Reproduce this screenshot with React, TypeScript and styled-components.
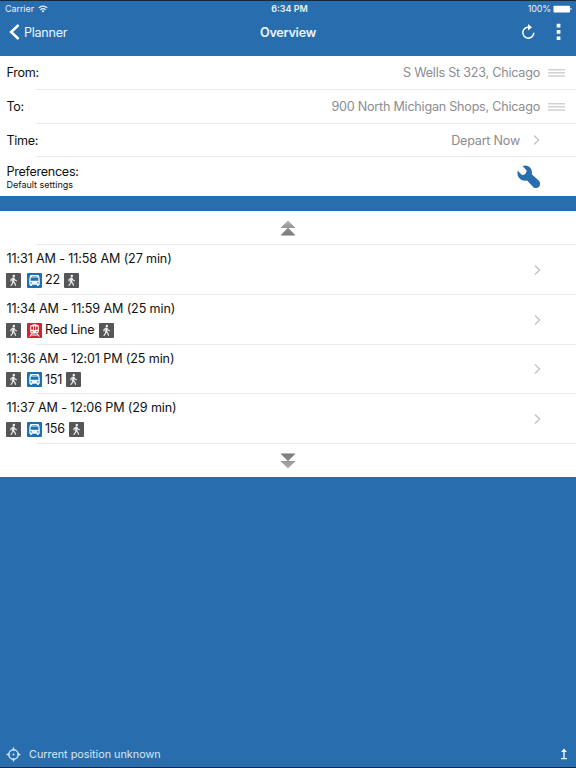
import React from "react";
import styled, { createGlobalStyle } from "styled-components";

const blue = "#286eae";

const GlobalStyle = createGlobalStyle`
  * { box-sizing: border-box; }
  body { margin: 0; background: ${blue}; }
`;

const Screen = styled.main`
  width: 576px;
  height: 768px;
  display: flex;
  flex-direction: column;
  overflow: hidden;
  background: ${blue};
  border-top: 1px solid #16283b;
  border-bottom: 1px solid #16283b;
  color: #111;
  font-family: Inter, "Liberation Sans", sans-serif;
  font-size: 12.6px;
  white-space: nowrap;
  svg { display: block; flex: none; }
`;

const StatusBar = styled.div`
  height: 15px;
  display: grid;
  grid-template-columns: 1fr auto 1fr;
  align-items: center;
  padding: 0 4px 0 5px;
  color: #e9f1f8;
  font-size: 9px;
  line-height: 15px;
`;

const StatusGroup = styled.div<{ $end?: boolean }>`
  display: flex;
  align-items: center;
  justify-content: ${(p) => (p.$end ? "flex-end" : "flex-start")};
  gap: ${(p) => (p.$end ? 2 : 4)}px;
  letter-spacing: ${(p) => (p.$end ? -0.12 : -0.08)}px;
`;

const Clock = styled.span`
  font-weight: 600;
  padding-left: 2px;
`;

const NavBar = styled.header`
  height: 40px;
  flex: none;
  display: grid;
  grid-template-columns: 1fr auto 1fr;
  align-items: center;
  padding: 0 15px 8px 9px;
  color: #eef5fb;
`;

const Back = styled.div`
  display: flex;
  align-items: center;
  gap: 4px;
  letter-spacing: -0.28px;
`;

const Title = styled.h1`
  margin: 0;
  padding-left: 6px;
  font-size: 12.6px;
  font-weight: 600;
  letter-spacing: -0.25px;
`;

const Actions = styled.div`
  display: flex;
  justify-content: flex-end;
  align-items: center;
  gap: 21px;
`;

const Panel = styled.section`
  background: #fff;
  flex: none;
`;

const Divider = styled.div`
  height: 1px;
  margin-left: 36px;
  background: #e9e9eb;
`;

const Field = styled.div<{ $height: number }>`
  height: ${(p) => p.$height}px;
  display: flex;
  align-items: center;
  justify-content: space-between;
  padding: 0 11px 0 6.5px;
`;

const Label = styled.span`
  letter-spacing: -0.3px;
`;

const Value = styled.div<{ $chevron?: boolean }>`
  display: flex;
  align-items: center;
  gap: ${(p) => (p.$chevron ? 13 : 8)}px;
  padding-right: ${(p) => (p.$chevron ? 25 : 0)}px;
  color: #8c8c90;
  letter-spacing: -0.23px;
`;

const Preferences = styled.div`
  height: 39px;
  display: flex;
  justify-content: space-between;
  padding: 6px 35px 0 6.5px;
`;

const WrenchSlot = styled.div`
  padding-top: 2px;
`;

const PreferenceText = styled.div`
  display: flex;
  flex-direction: column;
  line-height: 17px;
`;

const Small = styled.span`
  font-size: 9px;
  line-height: 9px;
`;

const Gap = styled.div`
  height: 15px;
  flex: none;
`;

const Pager = styled.div`
  height: 33px;
  display: flex;
  align-items: center;
  justify-content: center;
`;

const Trip = styled.div<{ $height: number }>`
  height: ${(p) => p.$height}px;
  display: flex;
  align-items: center;
  justify-content: space-between;
  padding: 0 35.5px 0 6px;
`;

const TripBody = styled.div`
  display: flex;
  flex-direction: column;
  gap: 5px;
  line-height: 16px;
  letter-spacing: -0.13px;
`;

const Time = styled.span`
  padding-left: 0.5px;
`;

const Legs = styled.div`
  display: flex;
  align-items: center;
  height: 16px;
`;

const Tile = styled.span<{ $kind: Kind }>`
  width: 15px;
  height: 15px;
  display: flex;
  align-items: center;
  justify-content: center;
  border-radius: 1px;
  background: ${(p) => ({ walk: "#555657", bus: "#1972b5", train: "#ce2435" })[p.$kind]};
`;

const Line = styled.span`
  display: flex;
  align-items: center;
  gap: 3px;
  margin: 0 4.3px 0 6px;
  letter-spacing: -0.28px;
`;

const Footer = styled.footer`
  margin-top: auto;
  height: 26px;
  display: flex;
  align-items: center;
  padding: 0 8px 0 6px;
  color: #d9e7f3;
  font-size: 10.8px;
`;

const Position = styled.span`
  flex: 1;
  margin-left: 8px;
`;

type Kind = "walk" | "bus" | "train";

const Wifi = () => (
  <svg width="10" height="8" viewBox="0 0 10 8" fill="none" stroke="currentColor" strokeWidth="1.2">
    <path d="M.7 2.9Q5-.8 9.3 2.9M2.4 4.7Q5 2.5 7.6 4.7" />
    <path d="M5 7.4 3.5 5.9Q5 4.8 6.5 5.9Z" fill="currentColor" stroke="none" />
  </svg>
);

const Battery = () => (
  <svg width="19" height="8" viewBox="0 0 19 8" fill="#fff">
    <rect x=".5" y=".7" width="16.5" height="6.8" rx=".8" />
    <path d="M17.5 2.8q1.2.2 1.2 1.2t-1.2 1.2z" />
  </svg>
);

const BackArrow = () => (
  <svg width="11" height="16" viewBox="0 0 11 16" fill="none" stroke="#fff" strokeWidth="2.5">
    <path d="M9.6 1 2.1 8l7.5 7" />
  </svg>
);

const Refresh = () => (
  <svg width="14" height="16" viewBox="0 0 14 16" fill="none" stroke="#fff" strokeWidth="1.5">
    <path d="M12.8 8.7A5.5 5.5 0 1 1 8 3.2" />
    <path d="M7 0 11 3.2 7 6.4z" fill="#fff" stroke="none" />
  </svg>
);

const More = () => (
  <svg width="5" height="18" viewBox="0 0 5 18" fill="#fff">
    <path d="M.7.8h3.7v3.7H.7zM.7 7.1h3.7v3.7H.7zM.7 13.4h3.7v3.7H.7z" />
  </svg>
);

const Grip = () => (
  <svg width="17" height="8" viewBox="0 0 17 8" fill="#d1d1d4">
    <path d="M0 0h17v1.5H0zM0 3.1h17v1.5H0zM0 6.2h17v1.5H0z" />
  </svg>
);

const Chevron = () => (
  <svg width="7" height="10" viewBox="0 0 7 10" fill="none" stroke="#c4c4c8" strokeWidth="1.4">
    <path d="m1 .6 4.6 4.4L1 9.4" />
  </svg>
);

const Wrench = () => (
  <svg width="24" height="24" viewBox="0 0 24 24" fill={blue}>
    <path d="M.8 5.8 5 9.9Q8.8 10.2 9.7 5.4L5.5 1.1C10.8-1 15.9 3.3 14.8 9.2L22.2 16.1C25 20.3 20.9 24.8 16.7 22.4L10.1 15.5C4.2 16.8-1 11.8.8 5.8Z" />
  </svg>
);

const DoubleTriangle = ({ down = false }: { down?: boolean }) => (
  <svg width="16" height="16" viewBox="0 0 16 16">
    <defs>
      <linearGradient id={down ? "fadeDown" : "fadeUp"} x2="0" y2="1" gradientUnits="objectBoundingBox">
        <stop stopColor={down ? "#777" : "#b2b2b2"} />
        <stop offset="1" stopColor={down ? "#b2b2b2" : "#777"} />
      </linearGradient>
    </defs>
    <path
      fill={`url(#${down ? "fadeDown" : "fadeUp"})`}
      d={down ? "M.5.5h15L8 8.5zM.5 8h15L8 15.5z" : "M8 .5 15.5 8H.5zM8 7.5l7.5 8H.5z"}
    />
  </svg>
);

const Walker = () => (
  <svg width="15" height="15" viewBox="0 0 15 15" fill="none" stroke="#eee" strokeLinecap="round" strokeLinejoin="round">
    <circle cx="7.8" cy="3" r="1.25" fill="#eee" stroke="none" />
    <path d="M7.4 5.5 7.2 8.3" strokeWidth="2.2" />
    <path d="M7.1 5.3 5 6.5V8M8 5.5l1 1.6 1.4.7M7 8.5 6.5 10.3 5 12.3M7.4 8.6l1.4 1.7.7 2" strokeWidth="1.15" />
  </svg>
);

const Bus = () => (
  <svg width="15" height="15" viewBox="0 0 15 15" fill="#f1f7fb">
    <path
      fillRule="evenodd"
      d="M4.2 1.9h6.6q1.2 0 1.4 1.3l.6 3.5v5h-1v1.2H9.9v-1.2H5.1v1.2H3.2v-1.2h-1v-5l.6-3.5Q3 1.9 4.2 1.9ZM5 3v.6h5V3ZM3.9 4.6l-.5 3.2h8.2l-.5-3.2ZM3.4 9.2v1.2h1.4V9.2Zm6.8 0v1.2h1.4V9.2Z"
    />
  </svg>
);

const Train = () => (
  <svg width="15" height="15" viewBox="0 0 15 15" fill="#fff">
    <path fillRule="evenodd" d="M5.6 1.2h3.8v.8h1.2q1.2 0 1.2 1.2v5.4q0 1.8-1.6 1.8H4.8q-1.6 0-1.6-1.8V3.2Q3.2 2 4.4 2h1.2ZM4.2 3.6v3.2h2V3.6Zm4.6 0v3.2h2V3.6ZM7 3.3v3.9h1V3.3ZM4.4 8.2v1h1.4v-1Zm4.8 0v1h1.4v-1Z" />
    <path d="M4.3 10.4h1.2L4.8 11.5h5.4l-.7-1.1h1.2l2.1 3.2h-1.3l-.6-1H4.1l-.6 1H2.2z" />
  </svg>
);

const Mode = ({ kind }: { kind: Kind }) => (
  <Tile $kind={kind}>{kind === "walk" ? <Walker /> : kind === "bus" ? <Bus /> : <Train />}</Tile>
);

const Target = () => (
  <svg width="15" height="15" viewBox="0 0 15 15" fill="none" stroke="currentColor" strokeWidth="1.4">
    <circle cx="7.5" cy="7.5" r="4.7" />
    <path d="M7.5.6v3M7.5 11.4v3M.6 7.5h3M11.4 7.5h3" />
    <circle cx="7.5" cy="7.5" r="1" fill="currentColor" stroke="none" />
  </svg>
);

const UpFromBar = () => (
  <svg width="8" height="12" viewBox="0 0 8 12" fill="none" stroke="#eef5fb" strokeWidth="1.4">
    <path d="M4 1.5v8.7M1 10.6h6" />
    <path d="M4 .5 7 4H1z" fill="#eef5fb" stroke="none" />
  </svg>
);

const trips: { time: string; line: string; kind: Kind; height: number }[] = [
  { time: "11:31 AM - 11:58 AM (27 min)", line: "22", kind: "bus", height: 49 },
  { time: "11:34 AM - 11:59 AM (25 min)", line: "Red Line", kind: "train", height: 49 },
  { time: "11:36 AM - 12:01 PM (25 min)", line: "151", kind: "bus", height: 48 },
  { time: "11:37 AM - 12:06 PM (29 min)", line: "156", kind: "bus", height: 49 },
];

export default function App() {
  return (
    <>
      <GlobalStyle />
      <Screen>
        <StatusBar>
          <StatusGroup>Carrier <Wifi /></StatusGroup>
          <Clock>6:34 PM</Clock>
          <StatusGroup $end>100% <Battery /></StatusGroup>
        </StatusBar>
        <NavBar>
          <Back><BackArrow />Planner</Back>
          <Title>Overview</Title>
          <Actions><Refresh /><More /></Actions>
        </NavBar>
        <Panel>
          <Field $height={33}><Label>From:</Label><Value>S Wells St 323, Chicago<Grip /></Value></Field>
          <Divider />
          <Field $height={33}><Label>To:</Label><Value>900 North Michigan Shops, Chicago<Grip /></Value></Field>
          <Divider />
          <Field $height={32}><Label>Time:</Label><Value $chevron>Depart Now<Chevron /></Value></Field>
          <Divider />
          <Preferences>
            <PreferenceText><Label>Preferences:</Label><Small>Default settings</Small></PreferenceText>
            <WrenchSlot><Wrench /></WrenchSlot>
          </Preferences>
        </Panel>
        <Gap />
        <Panel>
          <Pager><DoubleTriangle /></Pager>
          {trips.map((trip) => (
            <React.Fragment key={trip.time}>
              <Divider />
              <Trip $height={trip.height}>
                <TripBody>
                  <Time>{trip.time}</Time>
                  <Legs>
                    <Mode kind="walk" />
                    <Line><Mode kind={trip.kind} />{trip.line}</Line>
                    <Mode kind="walk" />
                  </Legs>
                </TripBody>
                <Chevron />
              </Trip>
            </React.Fragment>
          ))}
          <Divider />
          <Pager><DoubleTriangle down /></Pager>
        </Panel>
        <Footer><Target /><Position>Current position unknown</Position><UpFromBar /></Footer>
      </Screen>
    </>
  );
}
